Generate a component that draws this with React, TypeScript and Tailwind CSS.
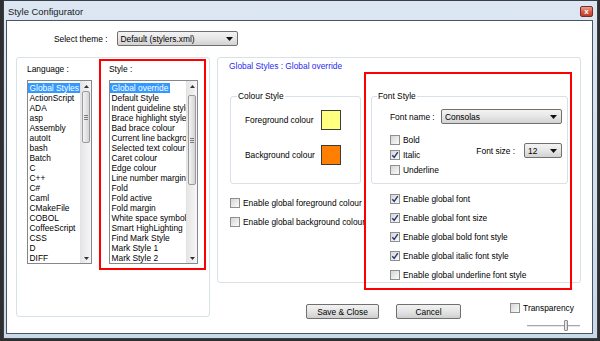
import React from "react";

const langs = [
  "Global Styles", "ActionScript", "ADA", "asp", "Assembly", "autoIt", "bash", "Batch", "C",
  "C++", "C#", "Caml", "CMakeFile", "COBOL", "CoffeeScript", "CSS", "D", "DIFF",
];

const styles = [
  "Global override", "Default Style", "Indent guideline style", "Brace highlight style",
  "Bad brace colour", "Current line background colour", "Selected text colour", "Caret colour",
  "Edge colour", "Line number margin", "Fold", "Fold active", "Fold margin", "White space symbol",
  "Smart HighLighting", "Find Mark Style", "Mark Style 1", "Mark Style 2",
];

function Tri({ up }: { up?: boolean }) {
  return (
    <svg width="5" height="3" viewBox="0 0 5 3">
      <path d={up ? "M0 3L2.5 0L5 3Z" : "M0 0H5L2.5 3Z"} fill="#333" />
    </svg>
  );
}

function ScrollBar({ thumb }: { thumb: string }) {
  return (
    <div className="flex w-[11px] flex-col border-l border-[#e2e2e2] bg-gradient-to-r from-[#e6e6e6] to-[#f6f6f6]">
      <div className="flex h-[10px] items-center justify-center">
        <Tri up />
      </div>
      <div
        className={`${thumb} mx-[1px] flex flex-col items-center justify-center gap-[1px] rounded-[2px] border border-[#9a9a9a] bg-gradient-to-r from-[#f4f4f4] to-[#d4d4d4]`}
      >
        <div className="h-px w-[4px] bg-[#7a7a7a]" />
        <div className="h-px w-[4px] bg-[#7a7a7a]" />
        <div className="h-px w-[4px] bg-[#7a7a7a]" />
      </div>
      <div className="flex-1" />
      <div className="flex h-[10px] items-center justify-center">
        <Tri />
      </div>
    </div>
  );
}

function ListBox({ items, width, thumb }: { items: string[]; width: string; thumb: string }) {
  return (
    <div className={`${width} flex h-[184px] border border-[#828790] bg-white`}>
      <div className="min-w-0 flex-1 overflow-hidden pt-[2px] leading-[10px]">
        {items.map((it, i) => (
          <div key={it} className="h-[10px] whitespace-nowrap">
            <span
              className={`inline-block h-[10px] px-[1.5px] ${i === 0 ? "bg-[#3399ff] text-white" : ""}`}
            >
              {it}
            </span>
          </div>
        ))}
      </div>
      <ScrollBar thumb={thumb} />
    </div>
  );
}

function Combo({ text, width }: { text: string; width: string }) {
  return (
    <div
      className={`${width} flex h-[15px] items-center justify-between rounded-[2px] border border-[#707070] bg-gradient-to-b from-[#f3f3f3] via-[#e6e6e6] to-[#d2d2d2] pl-[3px] pr-[4px]`}
    >
      <span className="whitespace-nowrap">{text}</span>
      <svg width="7" height="4" viewBox="0 0 7 4">
        <path d="M0 0H7L3.5 4Z" fill="#111" />
      </svg>
    </div>
  );
}

function Check({ checked }: { checked?: boolean }) {
  return (
    <span className="flex h-[10px] w-[10px] shrink-0 items-center justify-center border border-[#8e8f8f] bg-gradient-to-br from-[#d6d6d6] to-[#fbfbfb]">
      {checked && (
        <svg width="8" height="8" viewBox="0 0 8 8">
          <path d="M1.3 4.2L3.2 6.4L6.8 1.2" fill="none" stroke="#253a72" strokeWidth="1.4" />
        </svg>
      )}
    </span>
  );
}

function CheckRow({ label, checked, h }: { label: string; checked?: boolean; h: string }) {
  return (
    <div className={`${h} flex items-center gap-[3px] whitespace-nowrap`}>
      <Check checked={checked} />
      <span>{label}</span>
    </div>
  );
}

function Button({ label, width }: { label: string; width: string }) {
  return (
    <div
      className={`${width} flex h-[15px] items-center justify-center rounded-[2px] border border-[#707070] bg-gradient-to-b from-[#f2f2f2] via-[#e4e4e4] to-[#cfcfcf]`}
    >
      {label}
    </div>
  );
}

export default function App() {
  return (
    <div className="h-[341px] w-[600px] overflow-hidden bg-[#2f2f2f] font-['Liberation_Sans',Arial,sans-serif] text-[8.4px] leading-[10px] text-black">
      <div className="ml-[3px] mr-[2px] flex h-[339px] flex-col border border-[#3a3f47] bg-gradient-to-b from-[#dce7f3] to-[#c9d9ea]">
        {/* title bar */}
        <div className="flex h-[19px] shrink-0 items-start justify-between pl-[4px] pr-[4px]">
          <span className="mt-[5px] text-[9.4px] leading-[12px] text-[#1a1a1a]">Style Configurator</span>
          <div className="mt-[5px] flex h-[11px] w-[13px] items-center justify-center rounded-[2px] border border-[#7c2b22] bg-gradient-to-b from-[#e9a08e] via-[#d2604c] to-[#c0392b] text-[8px] font-bold leading-none text-white">
            x
          </div>
        </div>

        {/* client area */}
        <div className="mb-[4px] ml-[2px] mr-[4px] flex-1 border border-[#4a5563] bg-white">
          <div className="mt-[10px] flex items-center gap-[9px] pl-[47px]">
            <span>Select theme :</span>
            <Combo text="Default (stylers.xml)" width="w-[121px]" />
          </div>

          <div className="ml-[9px] mt-[11px] flex items-start gap-[7px]">
            {/* left group */}
            <div className="flex h-[260px] w-[194px] items-start gap-[7px] rounded-[3px] border border-[#d8e0e8] pl-[10px] pt-[1px]">
              <div className="flex flex-col pt-[5px]">
                <span className="h-[10px]">Language :</span>
                <div className="mt-[6px]">
                  <ListBox items={langs} width="w-[65px]" thumb="h-[52px]" />
                </div>
              </div>
              <div className="flex h-[211px] w-[107px] flex-col border-2 border-[#ff0000] pl-[8px] pt-[3px]">
                <span className="h-[10px]">Style :</span>
                <div className="mt-[6px]">
                  <ListBox items={styles} width="w-[89px]" thumb="mt-[4px] h-[90px]" />
                </div>
              </div>
            </div>

            {/* right column */}
            <div className="relative flex w-[364px] flex-col">
              <div className="h-[226px] rounded-[3px] border border-[#d8e0e8]">
                <div className="pl-[11px] pt-[2px] leading-[12px] text-[#2a2af0]">
                  Global Styles : Global override
                </div>
                <div className="mt-[19px] flex items-start gap-[10px] pl-[12px]">
                  <div className="flex w-[131px] flex-col">
                    <fieldset className="h-[93px] rounded-[3px] border border-[#d8e0e8]">
                      <legend className="ml-[6px] px-[1px] leading-[10px]">Colour Style</legend>
                      <div className="mt-[9px] flex h-[20px] items-center justify-between pl-[14px] pr-[19px]">
                        <span>Foreground colour</span>
                        <div className="h-[20px] w-[20px] border border-[#3c3c3c] bg-[#ffff80]" />
                      </div>
                      <div className="mt-[15px] flex h-[20px] items-center justify-between pl-[14px] pr-[19px]">
                        <span>Background colour</span>
                        <div className="h-[20px] w-[20px] border border-[#3c3c3c] bg-[#ff8000]" />
                      </div>
                    </fieldset>
                    <div className="mt-[9px] flex flex-col">
                      <CheckRow h="h-[19px]" label="Enable global foreground colour" />
                      <CheckRow h="h-[19px]" label="Enable global background colour" />
                    </div>
                  </div>

                  <div className="flex w-[197px] flex-col">
                    <fieldset className="h-[93px] rounded-[3px] border border-[#d8e0e8]">
                      <legend className="ml-[5px] px-[1px] leading-[10px]">Font Style</legend>
                      <div className="mt-[8px] flex items-center justify-between pl-[18px] pr-[5px]">
                        <span>Font name :</span>
                        <Combo text="Consolas" width="w-[121px]" />
                      </div>
                      <div className="mt-[8px] flex items-start justify-between pl-[18px] pr-[5px]">
                        <div className="flex flex-col">
                          <CheckRow h="h-[15px]" label="Bold" />
                          <CheckRow h="h-[15px]" label="Italic" checked />
                          <CheckRow h="h-[15px]" label="Underline" />
                        </div>
                        <div className="mt-[11px] flex items-center gap-[9px]">
                          <span>Font size :</span>
                          <Combo text="12" width="w-[38px]" />
                        </div>
                      </div>
                    </fieldset>
                    <div className="mt-[5px] flex flex-col pl-[19px]">
                      <CheckRow h="h-[19px]" label="Enable global font" checked />
                      <CheckRow h="h-[19px]" label="Enable global font size" checked />
                      <CheckRow h="h-[19px]" label="Enable global bold font style" checked />
                      <CheckRow h="h-[19px]" label="Enable global italic font style" checked />
                      <CheckRow h="h-[19px]" label="Enable global underline font style" />
                    </div>
                  </div>
                </div>
              </div>

              <div className="mt-[21px] flex items-start pr-[1px]">
                <div className="ml-[89px]">
                  <Button label="Save & Close" width="w-[73px]" />
                </div>
                <div className="ml-[17px]">
                  <Button label="Cancel" width="w-[65px]" />
                </div>
                <div className="ml-auto -mt-[1px] flex flex-col items-end">
                  <div className="mr-[6px]">
                    <CheckRow h="h-[10px]" label="Transparency" />
                  </div>
                  <div className="relative mt-[7px] h-[11px] w-[53px]">
                    <div className="absolute left-0 right-0 top-[5px] h-[2px] border-t border-[#a8a8a8] border-b-white bg-[#e6e6e6]" />
                    <div className="absolute left-[37px] top-0 h-[11px] w-[4px] rounded-[1px] border border-[#8a8a8a] bg-gradient-to-r from-[#f4f4f4] to-[#d0d0d0]" />
                  </div>
                </div>
              </div>

              {/* red annotation box */}
              <div className="pointer-events-none absolute left-[147px] top-[15px] h-[218px] w-[208px] border-2 border-[#ff0000]" />
            </div>
          </div>
        </div>
      </div>
    </div>
  );
}
